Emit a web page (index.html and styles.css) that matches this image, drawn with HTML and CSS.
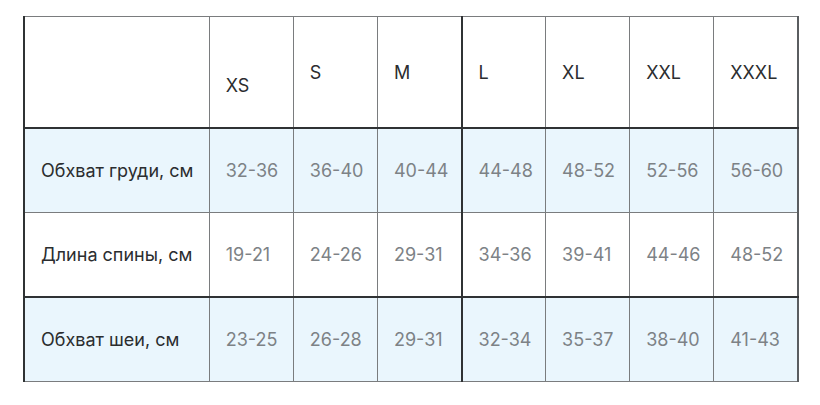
FILE: index.html
```html
<!DOCTYPE html>
<html lang="ru">
<head>
<meta charset="utf-8">
<link rel="stylesheet" href="styles.css">
</head>
<body>
<table class="sizes">
  <colgroup>
    <col class="c-label">
    <col class="c-size"><col class="c-size"><col class="c-size"><col class="c-size">
    <col class="c-size"><col class="c-size"><col class="c-size">
  </colgroup>
  <thead>
    <tr class="head">
      <th></th>
      <th class="xs">XS</th>
      <th>S</th>
      <th>M</th>
      <th class="split">L</th>
      <th>XL</th>
      <th>XXL</th>
      <th>XXXL</th>
    </tr>
  </thead>
  <tbody>
    <tr class="alt">
      <td class="label">Обхват груди, см</td>
      <td>32-36</td><td>36-40</td><td>40-44</td><td class="split">44-48</td><td>48-52</td><td>52-56</td><td>56-60</td>
    </tr>
    <tr class="sep">
      <td class="label">Длина спины, см</td>
      <td>19-21</td><td>24-26</td><td>29-31</td><td class="split">34-36</td><td>39-41</td><td>44-46</td><td>48-52</td>
    </tr>
    <tr class="alt">
      <td class="label">Обхват шеи, см</td>
      <td>23-25</td><td>26-28</td><td>29-31</td><td class="split">32-34</td><td>35-37</td><td>38-40</td><td>41-43</td>
    </tr>
  </tbody>
</table>
</body>
</html>
```

FILE: styles.css
```css
html, body {
  margin: 0;
  padding: 0;
  background: #ffffff;
}

.sizes {
  margin: 16px 0 0 23px;
  border-collapse: collapse;
  table-layout: fixed;
  width: 776px;
  font-family: Inter, "Noto Sans", "Liberation Sans", sans-serif;
  font-size: 18px;
  color: #2b2d2f;
}

.c-label { width: 185px; }
.c-size { width: 84px; }

.sizes th,
.sizes td {
  border: 1px solid #7a7c7e;
  padding: 0 0 0 16px;
  text-align: left;
  vertical-align: middle;
}

.sizes th {
  font-weight: 400;
  height: 110px;
}

.sizes th.xs {
  vertical-align: bottom;
  height: 79px;
  padding-bottom: 31px;
}

.sizes td {
  height: 83px;
  color: #7d8286;
}

.sizes td.label {
  color: #2b2d2f;
}

.sizes th:first-child,
.sizes td:first-child {
  border-left: 2px solid #2f3234;
}

.sizes th:last-child,
.sizes td:last-child {
  border-right: 2px solid #5a5d60;
}

.sizes .split {
  border-left: 2px solid #2f3234;
}

.head th {
  border-bottom: 2px solid #2f3234;
}

.sep td {
  border-bottom: 2px solid #2f3234;
}

.alt td {
  background: #eaf6fd;
}
```
